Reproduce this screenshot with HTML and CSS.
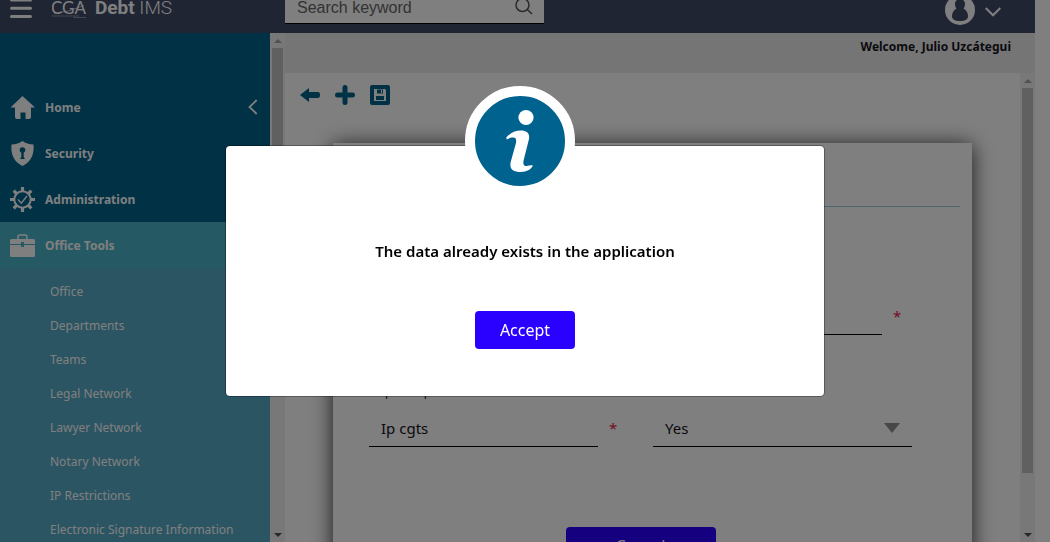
FILE: index.html
```html
<!DOCTYPE html>
<html lang="en">
<head>
<meta charset="utf-8">
<title>Debt IMS</title>
<link rel="stylesheet" href="styles.css">
</head>
<body>
<div class="app">
  <header class="topbar">
    <div class="brand">
      <button class="icon-button" aria-label="Toggle menu">
        <svg width="22" height="20" viewBox="0 0 22 20" fill="none" stroke="#fff" stroke-width="3" stroke-linecap="round"><path d="M1.500 2h19M1.500 10.300h19M1.500 18.500h19"/></svg>
      </button>
      <a class="logo" href="#">
        <svg class="logo-mark" width="35" height="20" viewBox="0 0 35 20" fill="none" stroke="#fff"><text x="-1" y="16" fill="#fff" stroke="none">CGA</text><path d="M0 18h27M22 19.500h12" stroke-opacity=".5" stroke-dasharray="2 .6"/><path d="M2 15.500q14-1 30-8" stroke-width=".6"/></svg>
        <span class="logo-name"><b>Debt</b> IMS</span>
      </a>
    </div>
    <form class="search">
      <input class="search-input" type="text" placeholder="Search keyword" aria-label="Search keyword">
      <svg class="search-icon" width="18" height="18" viewBox="0 0 18 18" fill="none" stroke="#555" stroke-width="1.500"><circle cx="7.500" cy="8" r="6.500"/><path d="M12.200 12.500L17 17"/></svg>
    </form>
    <button class="icon-button user" aria-label="User menu">
      <svg width="30" height="30" viewBox="0 0 30 30"><circle cx="15" cy="15" r="15" fill="#fff"/><path d="M15 4c-3 0-5 2.500-5 5 0 2 .7 3.500 1.500 4.500C8.500 15 7 18 7 21c0 3.500 2.500 5 8 5s8-1.500 8-5c0-3-1.500-6-4.500-7.500.8-1 1.500-2.500 1.500-4.500 0-2.500-2-5-5-5z" fill="#3f4a66"/></svg>
      <svg class="chevron" width="16" height="10" viewBox="0 0 16 10" fill="none" stroke="#fff" stroke-width="2"><path d="M.7 1L8 8.300 15.300 1"/></svg>
    </button>
  </header>

  <div class="body">
    <nav class="sidebar">
      <ul class="menu">
        <li><a class="menu-item" href="#">
          <svg width="25" height="25" viewBox="0 0 25 25" fill="#fff"><path d="M12.500 1L25 12.500h-4V22q0 2-2 2h-3.500v-6.500h-5V24H7q-2 0-2-2v-9.500H.5z"/></svg>
          <span>Home</span>
          <svg class="collapse" width="10" height="16" viewBox="0 0 10 16" fill="none" stroke="#fff" stroke-width="1.800"><path d="M8.700 1L1.500 8l7.200 7"/></svg>
        </a></li>
        <li><a class="menu-item" href="#">
          <svg width="25" height="25" viewBox="0 0 25 25"><path d="M12.500 0c3 2.500 6.500 3.200 11 3.500C24.500 13 21 21 12.500 25 4 21 .5 13 1.500 3.500 6 3.200 9.500 2.500 12.500 0z" fill="#fff"/><circle cx="12.500" cy="9" r="2.800" fill="#00628b"/><path d="M11.300 10h2.400v6l1.300 2h-5l1.300-2z" fill="#00628b"/></svg>
          <span>Security</span>
        </a></li>
        <li><a class="menu-item" href="#">
          <svg width="25" height="25" viewBox="0 0 25 25" fill="none" stroke="#fff"><circle cx="12.500" cy="12.500" r="8.200" stroke-width="2"/><path d="M12.500 0v4M12.500 21v4M0 12.500h4M21 12.500h4M3.700 3.700l2.800 2.800M18.500 18.500l2.800 2.800M21.300 3.700l-2.800 2.800M6.500 18.500l-2.800 2.800" stroke-width="3.200"/><path d="M8 12.500l3.300 3.700 5.700-7.200" stroke-width="1.400"/></svg>
          <span>Administration</span>
        </a></li>
        <li><a class="menu-item active" href="#">
          <svg width="25" height="25" viewBox="0 0 25 25"><path d="M8 6V4q0-2 2-2h5q2 0 2 2v2" fill="none" stroke="#fff" stroke-width="1.500"/><rect y="6" width="25" height="18" rx="1.500" fill="#fff"/><path d="M0 11.500h25" fill="none" stroke="#4ab3c8"/><path d="M11 9h3v5h-3z" fill="#4ab3c8"/></svg>
          <span>Office Tools</span>
        </a>
        <ul class="submenu">
          <li><a href="#">Office</a></li>
          <li><a href="#">Departments</a></li>
          <li><a href="#">Teams</a></li>
          <li><a href="#">Legal Network</a></li>
          <li><a href="#">Lawyer Network</a></li>
          <li><a href="#">Notary Network</a></li>
          <li><a href="#">IP Restrictions</a></li>
          <li><a href="#">Electronic Signature Information</a></li>
        </ul></li>
      </ul>
    </nav>
    <div class="scrollbar"><i class="arrow up"></i><i class="thumb menu-thumb"></i><i class="arrow down"></i></div>

    <main class="main">
      <div class="welcome">Welcome, Julio Uzcátegui</div>
      <div class="workspace">
        <div class="content">
          <div class="toolbar">
            <button class="icon-button" aria-label="Back"><svg width="20" height="20" viewBox="0 0 20 20" fill="#00628b"><path d="M0 10l9-7v4h9q2 0 2 3t-2 3H9v4z"/></svg></button>
            <button class="icon-button" aria-label="Add"><svg width="20" height="20" viewBox="0 0 20 20" fill="none" stroke="#00628b" stroke-width="5" stroke-linecap="round"><path d="M10 2.500v15M2.500 10h15"/></svg></button>
            <button class="icon-button" aria-label="Save"><svg width="20" height="20" viewBox="0 0 20 20"><rect width="20" height="20" rx="2" fill="#00628b"/><path d="M4 4h11l1 1v11H4z" fill="#fff"/><path d="M7 4.500h6v4H7zM6 11h8v4H6z" fill="#00628b"/><path d="M11 5h1v3h-1z" fill="#fff"/></svg></button>
          </div>
          <form class="card">
            <hr class="rule">
            <div class="grid upper">
              <div class="field second"><input class="control" type="text" aria-label="Value"><span class="required">*</span></div>
            </div>
            <div class="grid">
              <div>
                <label class="label" for="group">Ip Group</label>
                <div class="field"><input class="control" id="group" type="text" value="Ip cgts"><span class="required">*</span></div>
              </div>
              <div>
                <label class="label" for="active">Active</label>
                <div class="select-wrap"><select class="control" id="active"><option>Yes</option><option>No</option></select></div>
              </div>
            </div>
            <div class="actions"><button class="button cancel" type="button">Cancel</button></div>
          </form>
        </div>
        <div class="scrollbar"><i class="arrow up"></i><i class="thumb page-thumb"></i><i class="arrow down"></i></div>
      </div>
    </main>
  </div>
</div>

<div class="overlay">
  <section class="dialog" role="alertdialog" aria-labelledby="message">
    <div class="badge"><svg width="90" height="90" viewBox="0 0 90 90" fill="#fff"><circle cx="51" cy="21.500" r="7.600"/><path d="M31.300 41.500C35 37 40 34.500 46 34.500c6 0 9 3 8 8.500l-5.300 21c-1 4 0 6 3 6 2 0 4-1 6-.5-.5 3-6 6.500-12 6.500-8 0-11.500-3.500-10-10l5-18c1-4 .5-6.500-2.500-6.500-2.500 0-4 .8-6.500 2z"/></svg></div>
    <p class="message" id="message">The data already exists in the application</p>
    <button class="button accept">Accept</button>
  </section>
</div>
</body>
</html>
```
FILE: styles.css
```css
* { box-sizing: border-box; }
body {
  margin: 0;
  height: 100vh;
  overflow: hidden;
  font-family: "Noto Sans", "Open Sans", sans-serif;
  font-size: 15px;
  color: #151520;
  background: #fff;
}
ul { list-style: none; margin: 0; padding: 0; }
a { color: inherit; text-decoration: none; }
svg { display: block; flex: none; }
.app { height: 100vh; margin-right: 15px; display: flex; flex-direction: column; }

.topbar {
  height: 33px;
  flex: none;
  display: flex;
  align-items: flex-end;
  background: #3f4a66;
  overflow: hidden;
}
.icon-button { border: 0; padding: 0; background: none; }
.brand { width: 285px; padding: 0 0 15px 10px; display: flex; align-items: flex-end; gap: 20px; }
.logo { display: flex; align-items: flex-end; gap: 8px; color: #fff; font-family: Roboto, sans-serif; line-height: 20px; }
.logo-mark { font-family: Lato, sans-serif; font-size: 17px; }
.logo-name { font-size: 19px; font-weight: 300; }
.logo-name b { font-weight: 700; }
.search {
  width: 259px;
  height: 40px;
  margin-bottom: 9px;
  padding: 0 11px 7px 12px;
  display: flex;
  align-items: flex-end;
  background: #fff;
  border-bottom: 1px solid #000;
}
.search-input {
  flex: 1;
  min-width: 0;
  height: 16px;
  padding: 0;
  border: 0;
  font: 16px/16px "Liberation Sans", sans-serif;
}
.search-input::placeholder { color: #666; opacity: 1; }
.search-icon { margin-bottom: 1px; }
.user { margin: 0 34px 8px auto; display: flex; align-items: center; gap: 10px; }
.chevron { margin-top: 3px; }

.body { flex: 1; min-height: 0; display: flex; }
.sidebar { width: 270px; flex: none; padding-top: 51px; overflow: hidden; background: #00628b; color: #fff; }
.menu-item { height: 46px; padding: 0 12px 0 10px; display: flex; align-items: center; gap: 10px; font-size: 12px; font-weight: 700; }
.active { background: #4ab3c8; }
.collapse { margin-left: auto; }
.submenu { padding: 7px 0 0 50px; background: #56aac6; font-size: 12px; line-height: 34px; }

.scrollbar { width: 15px; flex: none; padding: 0 2px; display: flex; flex-direction: column; align-items: center; background: #f1f1f1; }
.arrow { height: 15px; flex: none; display: flex; align-items: center; }
.arrow::before { content: ""; border: 4px solid transparent; }
.up::before { border-top: 0; border-bottom-color: #a3a3a3; }
.down { margin-top: auto; }
.down::before { border-bottom: 0; border-top-color: #505050; }
.thumb { width: 11px; background: #c1c1c1; }
.menu-thumb { height: 54%; }
.page-thumb { height: 82%; }

.main { flex: 1; min-width: 0; display: flex; flex-direction: column; }
.welcome { height: 40px; flex: none; padding: 0 24px; background: #eaeaea; text-align: right; font-size: 12px; font-weight: 700; line-height: 27px; }
.workspace { flex: 1; min-height: 0; display: flex; }
.content { flex: 1; min-width: 0; overflow: hidden; padding: 12px 48px 0; }
.toolbar { display: flex; gap: 15px; margin-left: -33px; }
.card { margin-top: 38px; height: 460px; padding: 63px 12px 0; background: #fff; box-shadow: 0 2px 20px rgba(0, 0, 0, .8); }
.rule { margin: 0 0 91px; border: 0; border-top: 1px solid #a3cbe0; }
.grid { margin: 0 24px; display: grid; grid-template-columns: 259px 259px; gap: 25px; }
.upper { margin-bottom: 47px; }
.second { grid-column: 2; }
.field { display: flex; gap: 11px; }
.label { display: block; height: 28px; padding-left: 12px; font-size: 12px; line-height: 20px; }
.control {
  width: 229px;
  height: 37px;
  padding: 0 12px;
  border: 0;
  border-bottom: 1px solid #000;
  border-radius: 0;
  background: none;
  font: inherit;
  color: inherit;
  appearance: none;
}
.required { color: #e6194b; line-height: 36px; }
.select-wrap { position: relative; }
.select-wrap .control { width: 100%; }
.select-wrap::after {
  content: "";
  position: absolute;
  right: 12px;
  top: 13px;
  border: 8px solid transparent;
  border-top: 10px solid #8f8f8f;
  border-bottom: 0;
}
.button { display: block; height: 38px; padding: 0; border: 0; border-radius: 4px; background: #2a00ff; color: #fff; font: inherit; font-size: 16px; }
.actions { padding: 80px 24px 0 0; display: flex; justify-content: center; }
.cancel { width: 150px; }

.overlay {
  position: fixed;
  inset: 0;
  display: flex;
  align-items: center;
  justify-content: center;
  background: rgba(0, 0, 0, .5);
}
.dialog {
  position: relative;
  width: 598px;
  max-width: 90%;
  padding: 90px 24px 47px;
  display: flex;
  flex-direction: column;
  align-items: center;
  border-radius: 4px;
  background: #fff;
  box-shadow: 0 0 0 1px rgba(0, 0, 0, .3);
}
.badge {
  position: absolute;
  top: -60px;
  left: calc(50% - 60px);
  border: 10px solid #fff;
  border-radius: 50%;
  background: #00628f;
}
.message { margin: 0 0 45px; line-height: 30px; font-weight: 600; color: #000; text-align: center; }
.accept { width: 100px; }
```
